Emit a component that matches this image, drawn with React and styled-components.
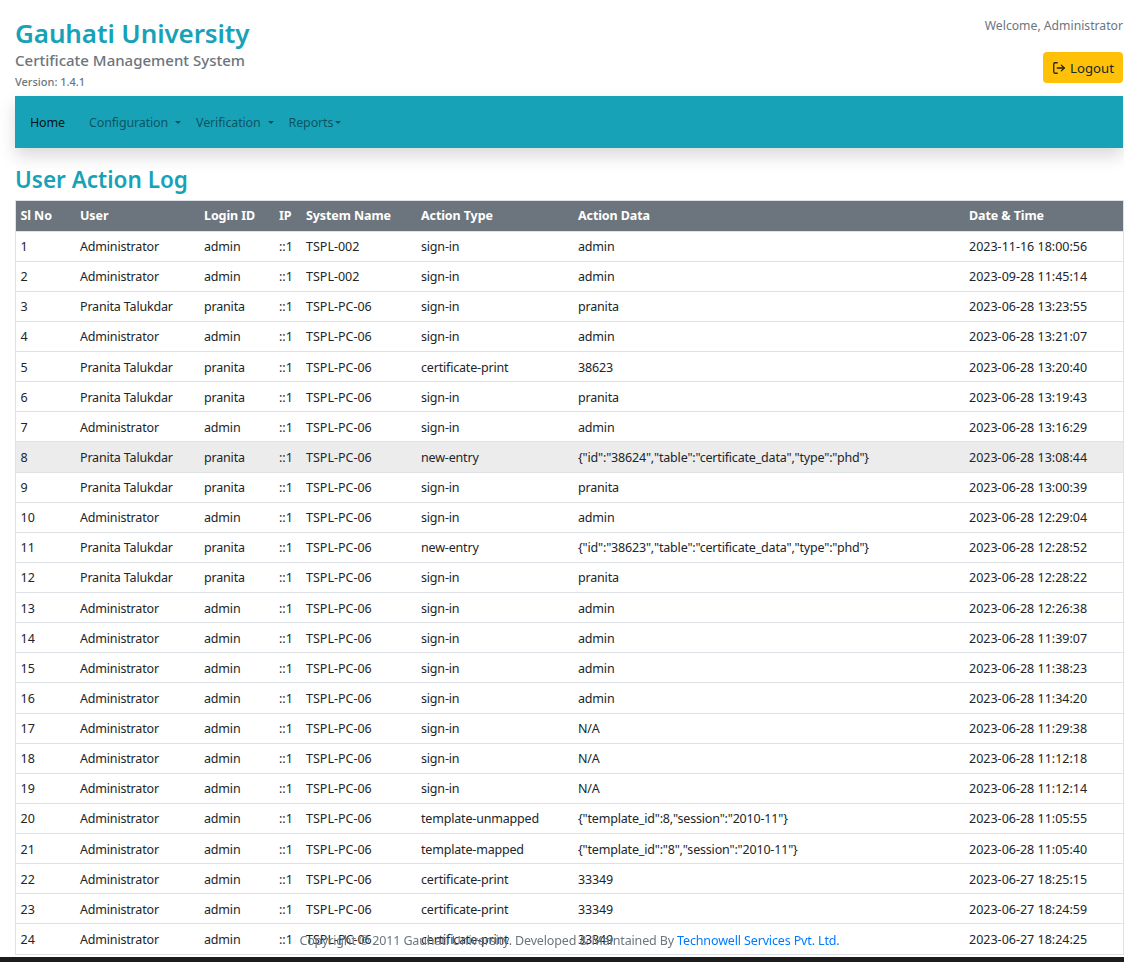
import React from "react"
import styled, { createGlobalStyle } from "styled-components"
import { LogOut } from "lucide-react"

const GlobalStyle = createGlobalStyle`
    html, body {
        margin: 0;
        height: 962px;
        overflow: hidden;
        background: #fff;
        font-family: "Noto Sans", "Open Sans", sans-serif;
        color: #212529;
    }
`

const Page = styled.div`
    padding: 0 1px 0 15px;
`

const Header = styled.header`
    display: flex;
    justify-content: space-between;
    height: 96px;
`

const Brand = styled.div`
    padding-top: 17px;
`

const Title = styled.h1`
    margin: 0;
    font-size: 26px;
    line-height: 33px;
    font-weight: 600;
    letter-spacing: -0.1px;
    color: #17a2b8;
`

const Subtitle = styled.h2`
    margin: 0;
    font-size: 15px;
    line-height: 20px;
    font-weight: 500;
    color: #6c757d;
`

const Version = styled.div`
    margin-top: 5px;
    font-size: 11px;
    line-height: 14px;
    font-weight: 500;
    color: #6c757d;
`

const UserBox = styled.div`
    display: flex;
    flex-direction: column;
    align-items: flex-end;
    padding-top: 17px;
`

const Welcome = styled.div`
    font-size: 12.2px;
    line-height: 18px;
    color: #6c757d;
`

const LogoutButton = styled.button`
    display: flex;
    align-items: center;
    gap: 4px;
    margin-top: 17px;
    height: 31px;
    padding: 0 9px;
    border: 0;
    border-radius: 4px;
    background: #ffc107;
    color: #212529;
    font: inherit;
    font-size: 13.2px;
`

const NavBar = styled.nav`
    display: flex;
    align-items: center;
    height: 52px;
    padding-left: 15px;
    background: #17a2b8;
    box-shadow: 0 8px 16px rgba(0, 0, 0, 0.15);
`

const NavItem = styled.a`
    display: flex;
    align-items: center;
    margin-right: ${(p) => p.$gap}px;
    font-size: 12.5px;
    letter-spacing: -0.15px;
    color: ${(p) => (p.$active ? "rgba(0, 0, 0, 0.9)" : "rgba(0, 0, 0, 0.5)")};
`

const Caret = styled.span`
    width: 0;
    height: 0;
    margin-left: ${(p) => p.$gap}px;
    border-top: 3.5px solid rgba(0, 0, 0, 0.5);
    border-left: 3.5px solid transparent;
    border-right: 3.5px solid transparent;
`

const PageTitle = styled.h3`
    margin: 17px 0 6px;
    font-size: 22.5px;
    line-height: 29px;
    font-weight: 600;
    color: #17a2b8;
`

const LogTable = styled.table`
    width: 1108px;
    table-layout: fixed;
    border-collapse: collapse;
    border: 1px solid #dee2e6;
    font-size: 12.5px;
`

const HeadCell = styled.th`
    height: 30.5px;
    padding: 0 4.5px;
    box-sizing: border-box;
    background: #6c757d;
    color: #fff;
    font-weight: 700;
    letter-spacing: -0.1px;
    text-align: left;
    white-space: nowrap;
`

const Row = styled.tr`
    background: ${(p) => (p.$hover ? "#ececec" : "#fff")};
`

const Cell = styled.td`
    height: 30.14px;
    padding: 1px 4.5px 0;
    box-sizing: border-box;
    border-top: 1px solid #dee2e6;
    white-space: nowrap;
    letter-spacing: ${(p) => (p.$words ? "-0.18px" : "0")};
`

const Footer = styled.footer`
    position: fixed;
    left: 0;
    right: 0;
    bottom: 12px;
    padding-left: 15px;
    font-size: 12.5px;
    line-height: 18px;
    letter-spacing: -0.14px;
    text-align: center;
    color: #6c757d;

    a {
        color: #007bff;
    }
`

const BottomEdge = styled.div`
    position: fixed;
    left: 0;
    right: 0;
    bottom: 0;
    height: 5px;
    background: #1c1c1c;
`

const columns = [
    ["Sl No", 60],
    ["User", 124],
    ["Login ID", 75],
    ["IP", 27],
    ["System Name", 115],
    ["Action Type", 157],
    ["Action Data", 391],
    ["Date & Time", 159],
]

const admin = ["Administrator", "admin"]
const pranita = ["Pranita Talukdar", "pranita"]
const pc = "TSPL-PC-06"

const rows = [
    [admin, "TSPL-002", "sign-in", "admin", "2023-11-16 18:00:56"],
    [admin, "TSPL-002", "sign-in", "admin", "2023-09-28 11:45:14"],
    [pranita, pc, "sign-in", "pranita", "2023-06-28 13:23:55"],
    [admin, pc, "sign-in", "admin", "2023-06-28 13:21:07"],
    [pranita, pc, "certificate-print", "38623", "2023-06-28 13:20:40"],
    [pranita, pc, "sign-in", "pranita", "2023-06-28 13:19:43"],
    [admin, pc, "sign-in", "admin", "2023-06-28 13:16:29"],
    [pranita, pc, "new-entry", '{"id":"38624","table":"certificate_data","type":"phd"}', "2023-06-28 13:08:44"],
    [pranita, pc, "sign-in", "pranita", "2023-06-28 13:00:39"],
    [admin, pc, "sign-in", "admin", "2023-06-28 12:29:04"],
    [pranita, pc, "new-entry", '{"id":"38623","table":"certificate_data","type":"phd"}', "2023-06-28 12:28:52"],
    [pranita, pc, "sign-in", "pranita", "2023-06-28 12:28:22"],
    [admin, pc, "sign-in", "admin", "2023-06-28 12:26:38"],
    [admin, pc, "sign-in", "admin", "2023-06-28 11:39:07"],
    [admin, pc, "sign-in", "admin", "2023-06-28 11:38:23"],
    [admin, pc, "sign-in", "admin", "2023-06-28 11:34:20"],
    [admin, pc, "sign-in", "N/A", "2023-06-28 11:29:38"],
    [admin, pc, "sign-in", "N/A", "2023-06-28 11:12:18"],
    [admin, pc, "sign-in", "N/A", "2023-06-28 11:12:14"],
    [admin, pc, "template-unmapped", '{"template_id":8,"session":"2010-11"}', "2023-06-28 11:05:55"],
    [admin, pc, "template-mapped", '{"template_id":"8","session":"2010-11"}', "2023-06-28 11:05:40"],
    [admin, pc, "certificate-print", "33349", "2023-06-27 18:25:15"],
    [admin, pc, "certificate-print", "33349", "2023-06-27 18:24:59"],
    [admin, pc, "certificate-print", "33349", "2023-06-27 18:24:25"],
]

const App = () => {
    return (
        <Page>
            <GlobalStyle />
            <Header>
                <Brand>
                    <Title>Gauhati University</Title>
                    <Subtitle>Certificate Management System</Subtitle>
                    <Version>Version: 1.4.1</Version>
                </Brand>
                <UserBox>
                    <Welcome>Welcome, Administrator</Welcome>
                    <LogoutButton>
                        <LogOut size={14} strokeWidth={2.2} />
                        Logout
                    </LogoutButton>
                </UserBox>
            </Header>
            <NavBar>
                <NavItem $active $gap={24}>Home</NavItem>
                <NavItem $gap={15}>Configuration<Caret $gap={7} /></NavItem>
                <NavItem $gap={15}>Verification<Caret $gap={7} /></NavItem>
                <NavItem $gap={0}>Reports<Caret $gap={2} /></NavItem>
            </NavBar>
            <PageTitle>User Action Log</PageTitle>
            <LogTable>
                <colgroup>
                    {columns.map(([name, width]) => (
                        <col key={name} width={width} />
                    ))}
                </colgroup>
                <thead>
                    <tr>
                        {columns.map(([name]) => (
                            <HeadCell key={name}>{name}</HeadCell>
                        ))}
                    </tr>
                </thead>
                <tbody>
                    {rows.map(([user, system, type, data, date], i) => (
                        <Row key={i} $hover={i === 7}>
                            <Cell>{i + 1}</Cell>
                            <Cell $words>{user[0]}</Cell>
                            <Cell $words>{user[1]}</Cell>
                            <Cell>::1</Cell>
                            <Cell>{system}</Cell>
                            <Cell $words>{type}</Cell>
                            <Cell $words>{data}</Cell>
                            <Cell>{date}</Cell>
                        </Row>
                    ))}
                </tbody>
            </LogTable>
            <Footer>
                Copyright © 2011 Gauhati University. Developed & Maintained By <a>Technowell Services Pvt. Ltd.</a>
            </Footer>
            <BottomEdge />
        </Page>
    )
}

export default App
